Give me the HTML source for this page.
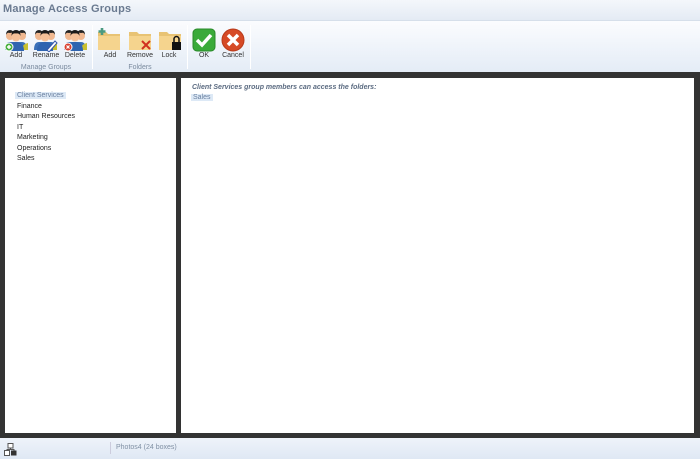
<!DOCTYPE html>
<html><head><meta charset="utf-8"><style>
*{margin:0;padding:0;box-sizing:border-box}
body{width:700px;height:459px;overflow:hidden;font-family:"Liberation Sans","DejaVu Sans",sans-serif;background:#fff;position:relative}
.title{position:absolute;left:0;top:0;width:700px;height:21px;background:linear-gradient(#f4f7fb,#e4ebf4);border-bottom:1px solid #d6dfea}
.title span{position:absolute;left:3px;top:3px;font-size:11px;font-weight:bold;color:#6a7a90;letter-spacing:0.2px}
.tb{position:absolute;left:0;top:21px;width:700px;height:51px;background:linear-gradient(#fbfcfe,#e4ecf6)}
.ic{position:absolute;top:6px}
.lb{position:absolute;top:31px;font-size:7px;color:#333;text-align:center;width:40px;margin-left:-20px}
.gl{position:absolute;top:43px;font-size:7px;color:#7a8a9e;text-align:center;width:80px;margin-left:-40px}
.sep{position:absolute;top:4px;width:1px;height:44px;background:#d5dde8;border-right:1px solid #fff}
.dark{position:absolute;left:0;top:72px;width:700px;height:366px;background:#333}
.pl{position:absolute;left:5px;top:78px;width:171px;height:355px;background:#fff}
.pr{position:absolute;left:181px;top:78px;width:513px;height:355px;background:#fff}
.it{position:absolute;left:12px;font-size:7px;color:#222}
.sel{background:#dde9f6;color:#6a80a0;padding:0 2px;left:10px}
.hd{position:absolute;left:11px;top:6px;font-size:7px;font-weight:bold;font-style:italic;color:#5a6a80}
.tag{position:absolute;left:10px;top:16px;font-size:7px;color:#6a80a0;background:#dde9f6;padding:0 2px}
.st{position:absolute;left:0;top:438px;width:700px;height:21px;background:linear-gradient(#eef3fa,#dfe8f4)}
</style></head><body>
<div class="title"><span>Manage Access Groups</span></div>
<div class="tb">
<svg width="0" height="0" style="position:absolute"><defs>
<g id="u"><circle cx="6" cy="8" r="4" fill="#f0b890"/><path d="M2 7q0-5 4-5t4 5q-1-3-4-2-3-1-4 2z" fill="#222"/><circle cx="18" cy="8" r="4" fill="#f0b890"/><path d="M14 7q0-5 4-5t4 5q-1-3-4-2-3-1-4 2z" fill="#222"/><path d="M1 22q0-8 5-8h12q5 0 5 8z" fill="#3a70b8"/><path d="M18 22q0-6 6-7v7z" fill="#c8c030"/><circle cx="12" cy="9" r="4.5" fill="#f4c098"/><path d="M7.5 8q0-6 4.5-6t4.5 6q-1-3-4.5-2.5-3.5-.5-4.5 2.5z" fill="#1a1a1a"/><path d="M4 23q0-9 8-9t8 9z" fill="#2f64b0"/></g>
<g id="f"><path d="M1 5h8l2 2h12v16H1z" fill="#e8c374"/><path d="M1 9h22v14H1z" fill="#f5d48e"/></g>
</defs></svg>
<svg class="ic" style="left:4px;top:7px" width="26" height="24"><use href="#u"/><circle cx="5" cy="19" r="4" fill="#4ab040" stroke="#fff"/><path d="M3 19h4M5 17v4" stroke="#fff" stroke-width="1.4"/></svg>
<svg class="ic" style="left:33px;top:7px" width="26" height="24"><use href="#u"/><path d="M14 22l8-9 2 2-8 9z" fill="#fff" stroke="#35a" stroke-width="1"/></svg>
<svg class="ic" style="left:63px;top:7px" width="26" height="24"><use href="#u"/><circle cx="5" cy="19" r="4" fill="#d84030" stroke="#fff"/><path d="M3.5 17.5l3 3M6.5 17.5l-3 3" stroke="#fff" stroke-width="1.2"/></svg>
<div class="lb" style="left:16px">Add</div><div class="lb" style="left:46px">Rename</div><div class="lb" style="left:75px">Delete</div>
<div class="gl" style="left:46px">Manage Groups</div>
<div class="sep" style="left:92px"></div>
<svg class="ic" style="left:97px;top:6px" width="26" height="24"><use href="#f"/><path d="M1.5 4.5h7M5 1v7" stroke="#4a9a80" stroke-width="2.6"/></svg>
<svg class="ic" style="left:128px;top:6px" width="26" height="24"><use href="#f"/><path d="M14 14l8 8M22 14l-8 8" stroke="#d03020" stroke-width="2"/></svg>
<svg class="ic" style="left:158px;top:6px" width="26" height="24"><use href="#f"/><rect x="14" y="15" width="9" height="8" fill="#111"/><path d="M16 15v-3a2.5 2.5 0 015 0v3" stroke="#111" stroke-width="1.5" fill="none"/></svg>
<div class="lb" style="left:110px">Add</div><div class="lb" style="left:140px">Remove</div><div class="lb" style="left:169px">Lock</div>
<div class="gl" style="left:140px">Folders</div>
<div class="sep" style="left:187px"></div>
<svg class="ic" style="left:192px;top:7px" width="24" height="24"><rect x="1" y="1" width="22" height="22" rx="4" fill="#3aaa3a" stroke="#2a8a2a"/><path d="M5 12l5 5 9-10" stroke="#fff" stroke-width="3.5" fill="none"/></svg>
<svg class="ic" style="left:221px;top:7px" width="24" height="24"><circle cx="12" cy="12" r="11" fill="#d64a26" stroke="#b83a1a"/><path d="M7 7l10 10M17 7L7 17" stroke="#fff" stroke-width="3.5"/></svg>
<div class="lb" style="left:204px">OK</div><div class="lb" style="left:233px">Cancel</div>
<div class="sep" style="left:250px"></div>
</div>
<div class="dark"></div>
<div class="pl">
<div class="it sel" style="top:14px">Client Services</div>
<div class="it" style="top:25px">Finance</div>
<div class="it" style="top:35px">Human Resources</div>
<div class="it" style="top:46px">IT</div>
<div class="it" style="top:56px">Marketing</div>
<div class="it" style="top:67px">Operations</div>
<div class="it" style="top:77px">Sales</div>
</div>
<div class="pr">
<div class="hd">Client Services group members can access the folders:</div>
<div class="tag">Sales</div>
</div>
<div class="st">
<svg style="position:absolute;left:4px;top:5px" width="13" height="13"><rect x="4" y="0.5" width="5" height="4.5" fill="#fff" stroke="#555"/><rect x="0.5" y="7.5" width="5" height="5" fill="#fff" stroke="#555"/><rect x="7" y="7.5" width="5.5" height="5" fill="#333"/><path d="M6.5 5v2M3 7.5V6.5h7v1" stroke="#555" fill="none"/></svg>
<div style="position:absolute;left:110px;top:4px;width:1px;height:12px;background:#ccd"></div>
<div style="position:absolute;left:116px;top:6px;font-size:7px;color:#8090a4">Photos4 (24 boxes)</div>
</div>
</body></html>
